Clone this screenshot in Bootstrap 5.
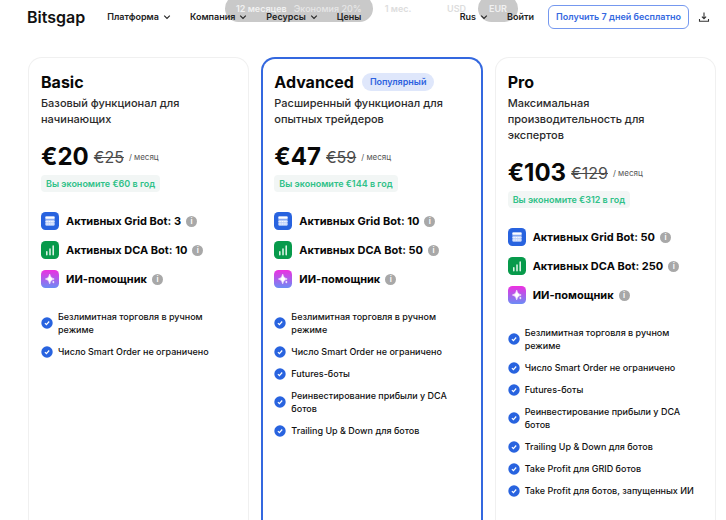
<!DOCTYPE html>
<html lang="ru">
<head>
<meta charset="utf-8">
<meta name="viewport" content="width=device-width, initial-scale=1">
<title>Bitsgap</title>
<link href="https://cdn.jsdelivr.net/npm/bootstrap@5.3.0/dist/css/bootstrap.min.css" rel="stylesheet">
<style>
body{font-family:Inter,"Liberation Sans",sans-serif;color:#080808;background:#fff;font-size:9px}
.page{height:100vh}
.topbar{height:34px;padding:0 16px 0 27px}
.brand-name{font-size:16px;line-height:20px;font-weight:600;color:#111;margin-right:22px}
.site-link{font-size:9px;line-height:12px;font-weight:600;color:#222;text-decoration:none;display:inline-flex;align-items:center;gap:4px;background:none;border:0;padding:0;white-space:nowrap}
.site-menu{gap:19px}
.site-link svg{width:8px;height:8px}
.trial{font-size:9px;line-height:12px;font-weight:600;color:#3468df;border:1px solid #7598ef;border-radius:6px;padding:5px 7px;white-space:nowrap;margin:0 9px 0 14px}
.period{left:225px;right:208px;top:-5px;height:27px;font-size:9px;line-height:12px;font-weight:600}
.period button{border:0;background:none;color:#ddd;padding:0;font-weight:600;white-space:nowrap}
.period .chosen{background:#c9c9c9;color:#f1f1f1;border-radius:14px;height:27px;padding:0 11px}
.period .saving{font-weight:500;color:#e6e6e6;margin-left:7px}
.plans{padding:23px 10px 0 28px;gap:12px}
.plan{flex:1 1 0;min-width:0;border:1px solid #f0f0f0;border-bottom:0;border-radius:14px 14px 0 0;padding:14px 12px 32px}
.plan-top{border:2px solid #3468df;border-bottom:0;padding:13px 11px 32px}
.plan h2{font-size:16px;line-height:20px;font-weight:700;margin:0}
.popular{font-size:9px;line-height:12px;font-weight:600;color:#2e63e0;background:#dfe7fb;border-radius:9px;padding:3px 8px}
.about{font-size:11px;line-height:16px;font-weight:500;color:#2b2b2b;margin:3px 20px 14px 0}
.price{height:32px;gap:5px}
.price strong{font-size:24px;line-height:32px;font-weight:700}
.price del{font-size:16px;color:#4c4c4c}
.price span{font-size:8px;color:#555}
.save{font-size:9px;line-height:13px;font-weight:600;color:#2fc188;background:#f2f6f5;border-radius:4px;padding:2px 5px;margin-top:2px}
.bots{margin:20px 0 22px;gap:11px}
.bots li{font-size:11px;line-height:18px;font-weight:700;white-space:nowrap}
.bots svg{width:18px;height:18px;margin-right:7px}
.hint{border:0;background:#a8a8a8;color:#fff;width:11px;height:11px;border-radius:50%;font-size:8px;line-height:11px;font-weight:600;padding:0;margin-left:5px}
.features{gap:9px;margin:0}
.features li{font-size:9px;line-height:13px;font-weight:500;color:#111;gap:5px}
.features svg{width:12px;height:12px;flex:none}
</style>
<script src="https://cdn.jsdelivr.net/npm/bootstrap@5.3.0/dist/js/bootstrap.bundle.min.js"></script>
</head>
<body>
<svg width="0" height="0" class="position-absolute" aria-hidden="true">
<defs><linearGradient id="pink" x1="0" y1="0" x2="0" y2="1"><stop offset="0" stop-color="#ee2fe0"/><stop offset="1" stop-color="#6b8cf5"/></linearGradient></defs>
<symbol id="chev" viewBox="0 0 8 8"><path d="M1.2 2.600 4 5.400l2.800-2.800" fill="none" stroke="#222" stroke-width="1.100"/></symbol>
<symbol id="grid" viewBox="0 0 18 18"><rect width="18" height="18" rx="4.500" fill="#2863df"/><rect x="4.500" y="4.500" width="9" height="9.300" rx=".8" fill="#bfd2fa"/><path d="M4.500 5.500h9" stroke="#fff" stroke-width="2"/><path d="M4.500 7.600h9" stroke="#5b87e8" stroke-width=".6"/><path d="M4.500 9.600h9M4.500 12h9" stroke="#fff" stroke-width="1" stroke-dasharray="1.200 .5"/></symbol>
<symbol id="dca" viewBox="0 0 18 18"><rect width="18" height="18" rx="4.500" fill="#079a4b"/><path d="M5.800 13.700v-3M9 13.700V8M12.200 13.700V5" stroke="#e4f6ec" stroke-width="1.500" stroke-linecap="round"/></symbol>
<symbol id="spark" viewBox="0 0 18 18"><rect width="18" height="18" rx="4.500" fill="url(#pink)"/><path d="M8.700 4.200Q9.200 8.400 13.200 9Q9.200 9.600 8.700 13.800Q8.200 9.600 4.400 9Q8.200 8.400 8.700 4.200Z" fill="#fff" stroke="#fff" stroke-width=".6"/><path d="M12.300 10.600q.2 1.300 1.400 1.500-1.200.2-1.400 1.500-.2-1.300-1.400-1.500 1.200-.2 1.400-1.500Z" fill="#fff"/></symbol>
<symbol id="tick" viewBox="0 0 12 12"><circle cx="6" cy="6" r="5.700" fill="#2863df"/><path d="m3.900 6.200 1.500 1.500 2.800-3.200" fill="none" stroke="#fff" stroke-width="1.200"/></symbol>
</svg>
<div class="page overflow-hidden">
<header class="topbar position-relative d-flex align-items-center">
  <div class="period position-absolute d-flex align-items-center justify-content-between" role="group" aria-label="Период и валюта">
    <div class="d-flex align-items-center"><button type="button" class="chosen">12 месяцев<span class="saving">Экономия 20%</span></button><button type="button" class="ms-2 ps-1">1 мес.</button></div>
    <div class="d-flex align-items-center gap-2"><button type="button" class="pe-1">USD</button><button type="button" class="chosen">EUR</button></div>
  </div>
  <a class="brand-name text-decoration-none position-relative" href="#">Bitsgap</a>
  <nav class="site-menu d-flex position-relative" aria-label="Меню">
    <a class="site-link" href="#">Платформа <svg><use href="#chev"/></svg></a>
    <a class="site-link" href="#">Компания <svg><use href="#chev"/></svg></a>
    <a class="site-link" href="#">Ресурсы <svg><use href="#chev"/></svg></a>
    <a class="site-link" href="#">Цены</a>
  </nav>
  <div class="d-flex align-items-center ms-auto position-relative">
    <div class="site-menu d-flex"><button type="button" class="site-link">Rus <svg><use href="#chev"/></svg></button><a class="site-link" href="#">Войти</a></div>
    <button type="button" class="trial bg-white">Получить 7 дней бесплатно</button>
    <a class="d-flex" href="#" aria-label="Скачать"><svg width="12" height="12" viewBox="0 0 12 12" fill="none" stroke="#333" stroke-width="1.100"><path d="M6 1.500v6M3.900 5.600 6 7.700l2.100-2.100M1.500 8v2.200h9V8"/></svg></a>
  </div>
</header>
<main class="plans d-flex">
  <section class="plan">
    <h2>Basic</h2>
    <p class="about">Базовый функционал для начинающих</p>
    <div class="price d-flex align-items-center"><strong>€20</strong><del>€25</del><span>/ месяц</span></div>
    <span class="save d-inline-block">Вы экономите €60 в год</span>
    <ul class="bots list-unstyled d-flex flex-column">
      <li class="d-flex align-items-center"><svg><use href="#grid"/></svg>Активных Grid Bot: 3<button type="button" class="hint">i</button></li>
      <li class="d-flex align-items-center"><svg><use href="#dca"/></svg>Активных DCA Bot: 10<button type="button" class="hint">i</button></li>
      <li class="d-flex align-items-center"><svg><use href="#spark"/></svg>ИИ-помощник<button type="button" class="hint">i</button></li>
    </ul>
    <ul class="features list-unstyled d-flex flex-column">
      <li class="d-flex align-items-center"><svg><use href="#tick"/></svg><span>Безлимитная торговля в ручном режиме</span></li>
      <li class="d-flex align-items-center"><svg><use href="#tick"/></svg><span>Число Smart Order не ограничено</span></li>
    </ul>
  </section>
  <section class="plan plan-top">
    <div class="d-flex align-items-center gap-2"><h2>Advanced</h2><span class="popular my-n1">Популярный</span></div>
    <p class="about">Расширенный функционал для опытных трейдеров</p>
    <div class="price d-flex align-items-center"><strong>€47</strong><del>€59</del><span>/ месяц</span></div>
    <span class="save d-inline-block">Вы экономите €144 в год</span>
    <ul class="bots list-unstyled d-flex flex-column">
      <li class="d-flex align-items-center"><svg><use href="#grid"/></svg>Активных Grid Bot: 10<button type="button" class="hint">i</button></li>
      <li class="d-flex align-items-center"><svg><use href="#dca"/></svg>Активных DCA Bot: 50<button type="button" class="hint">i</button></li>
      <li class="d-flex align-items-center"><svg><use href="#spark"/></svg>ИИ-помощник<button type="button" class="hint">i</button></li>
    </ul>
    <ul class="features list-unstyled d-flex flex-column">
      <li class="d-flex align-items-center"><svg><use href="#tick"/></svg><span>Безлимитная торговля в ручном режиме</span></li>
      <li class="d-flex align-items-center"><svg><use href="#tick"/></svg><span>Число Smart Order не ограничено</span></li>
      <li class="d-flex align-items-center"><svg><use href="#tick"/></svg><span>Futures-боты</span></li>
      <li class="d-flex align-items-center"><svg><use href="#tick"/></svg><span>Реинвестирование прибыли у DCA ботов</span></li>
      <li class="d-flex align-items-center"><svg><use href="#tick"/></svg><span>Trailing Up &amp; Down для ботов</span></li>
    </ul>
  </section>
  <section class="plan">
    <h2>Pro</h2>
    <p class="about">Максимальная производительность для экспертов</p>
    <div class="price d-flex align-items-center"><strong>€103</strong><del>€129</del><span>/ месяц</span></div>
    <span class="save d-inline-block">Вы экономите €312 в год</span>
    <ul class="bots list-unstyled d-flex flex-column">
      <li class="d-flex align-items-center"><svg><use href="#grid"/></svg>Активных Grid Bot: 50<button type="button" class="hint">i</button></li>
      <li class="d-flex align-items-center"><svg><use href="#dca"/></svg>Активных DCA Bot: 250<button type="button" class="hint">i</button></li>
      <li class="d-flex align-items-center"><svg><use href="#spark"/></svg>ИИ-помощник<button type="button" class="hint">i</button></li>
    </ul>
    <ul class="features list-unstyled d-flex flex-column">
      <li class="d-flex align-items-center"><svg><use href="#tick"/></svg><span>Безлимитная торговля в ручном режиме</span></li>
      <li class="d-flex align-items-center"><svg><use href="#tick"/></svg><span>Число Smart Order не ограничено</span></li>
      <li class="d-flex align-items-center"><svg><use href="#tick"/></svg><span>Futures-боты</span></li>
      <li class="d-flex align-items-center"><svg><use href="#tick"/></svg><span>Реинвестирование прибыли у DCA ботов</span></li>
      <li class="d-flex align-items-center"><svg><use href="#tick"/></svg><span>Trailing Up &amp; Down для ботов</span></li>
      <li class="d-flex align-items-center"><svg><use href="#tick"/></svg><span>Take Profit для GRID ботов</span></li>
      <li class="d-flex align-items-center"><svg><use href="#tick"/></svg><span>Take Profit для ботов, запущенных ИИ</span></li>
    </ul>
  </section>
</main>
</div>
</body>
</html>
